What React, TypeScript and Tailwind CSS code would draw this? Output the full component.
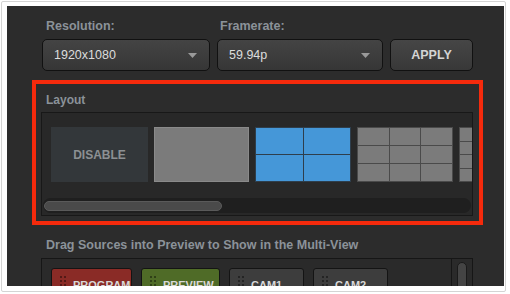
import React from 'react'

const font = { fontFamily: '"Liberation Sans", Arial, sans-serif' }

function Caret() {
    return (
        <svg width="9" height="5" viewBox="0 0 9 5" className="shrink-0">
            <path d="M0 0 H9 L4.5 5 Z" fill="#9a9a9a" />
        </svg>
    )
}

function Select({ value, width }: { value: string; width: string }) {
    return (
        <div
            className={`${width} h-[32px] flex items-center justify-between pl-[11px] pr-[12px] rounded-[5px] border-[1.5px] border-[#111] bg-gradient-to-b from-[#444] to-[#363636] text-[#dcdcdc] text-[12.5px]`}
        >
            <span>{value}</span>
            <Caret />
        </div>
    )
}

function Grid({ rows, cols, color, cell }: { rows: number; cols: number; color: string; cell: string }) {
    return (
        <div
            className={`grid gap-[1px] p-[1px] ${color}`}
            style={{ gridTemplateColumns: `repeat(${cols}, 1fr)`, gridTemplateRows: `repeat(${rows}, 1fr)` }}
        >
            {Array.from({ length: rows * cols }).map((_, i) => (
                <div key={i} className={cell} />
            ))}
        </div>
    )
}

function Grip() {
    return (
        <div className="grid grid-cols-2 gap-[2px] shrink-0">
            {Array.from({ length: 6 }).map((_, i) => (
                <div key={i} className="w-[2px] h-[2px] bg-black/40" />
            ))}
        </div>
    )
}

function Source({ label, bg, width }: { label: string; bg: string; width: string }) {
    return (
        <div className={`${width} h-[28px] shrink-0 flex items-start gap-[7px] pl-[8px] pt-[7px] rounded-[3px] border border-[#141414] ${bg}`}>
            <Grip />
            <span className="text-[11px] font-bold text-[#d8d8d8] leading-none pt-[4px]">{label}</span>
        </div>
    )
}

export default function App() {
    return (
        <div className="w-[510px] h-[294px] bg-white p-[1px]" style={font}>
            <div className="w-[505px] h-[291px] border border-[#d4d4d4] rounded-[2px] pl-[5px] pt-[4px]">
                <div className="w-[497px] h-[280px] bg-[#2c2c2c] overflow-hidden flex flex-col">
                    {/* resolution / framerate */}
                    <div className="shrink-0 flex pl-[39px] pt-[11px] h-[27px] text-[12.5px] font-bold text-[#8b9299]">
                        <span className="w-[174px]">Resolution:</span>
                        <span>Framerate:</span>
                    </div>
                    <div className="shrink-0 flex gap-[7px] pl-[35px] mt-[6px]">
                        <Select value="1920x1080" width="w-[168px]" />
                        <Select value="59.94p" width="w-[166px]" />
                        <div className="w-[83px] h-[32px] flex items-center justify-center rounded-[5px] border-[1.5px] border-[#111] bg-gradient-to-b from-[#464646] to-[#383838] text-[#d4d4d4] text-[12.5px] font-bold">
                            APPLY
                        </div>
                    </div>

                    {/* layout */}
                    <div className="shrink-0 ml-[25px] mt-[9px] w-[451px] h-[145px] border-4 border-[#f52a0c] flex flex-col">
                        <div className="shrink-0 pl-[10px] pt-[7px] h-[24px] text-[12px] font-bold text-[#8b9299]">Layout</div>
                        <div className="shrink-0 ml-[5px] mt-[4px] w-[432px] h-[104px] bg-[#282828] border border-[#181818] overflow-hidden flex flex-col">
                            <div className="shrink-0 flex gap-[6px] pl-[9px] pt-[14px] h-[85px]">
                                <div className="w-[97px] h-[55px] shrink-0 bg-[#33373a] flex items-center justify-center text-[12px] font-bold text-[#8c9093]">
                                    DISABLE
                                </div>
                                <div className="w-[95px] h-[55px] shrink-0 bg-[#7b7b7b] border border-[#8a8a8a]" />
                                <div className="w-[96px] h-[55px] shrink-0">
                                    <Grid rows={2} cols={2} color="bg-[#2e3e4c] h-full" cell="bg-[#4597d8]" />
                                </div>
                                <div className="w-[96px] h-[55px] shrink-0">
                                    <Grid rows={3} cols={3} color="bg-[#4a4a4a] h-full" cell="bg-[#7b7b7b]" />
                                </div>
                                <div className="w-[96px] h-[55px] shrink-0">
                                    <Grid rows={4} cols={4} color="bg-[#4a4a4a] h-full" cell="bg-[#7b7b7b]" />
                                </div>
                            </div>
                            <div className="shrink-0 mx-[1px] h-[15px] bg-[#1f1f1f] rounded-full flex items-center px-[1px]">
                                <div className="w-[178px] h-[10px] rounded-full bg-[#4a4a4a] border border-[#5a5a5a]" />
                            </div>
                        </div>
                    </div>

                    {/* sources */}
                    <div className="shrink-0 pl-[39px] pt-[11px] h-[33px] text-[12.5px] font-bold text-[#8b9299]">
                        Drag Sources into Preview to Show in the Multi-View
                    </div>
                    <div className="shrink-0 ml-[34px] w-[432px] h-[60px] border border-[#161616] bg-[#2a2a2a] flex">
                        <div className="flex-1 flex gap-[9px] pl-[9px] pt-[9px] border-r border-[#161616]">
                            <Source label="PROGRAM" bg="bg-[#8a2b26]" width="w-[81px]" />
                            <Source label="PREVIEW" bg="bg-[#4f6b27]" width="w-[79px]" />
                            <Source label="CAM1" bg="bg-[#3d3d3d]" width="w-[75px]" />
                            <Source label="CAM2" bg="bg-[#3d3d3d]" width="w-[75px]" />
                        </div>
                        <div className="w-[20px] flex justify-center pt-[3px]">
                            <div className="w-[10px] h-[50px] rounded-full bg-[#444] border border-[#1a1a1a]" />
                        </div>
                    </div>
                </div>
            </div>
        </div>
    )
}
